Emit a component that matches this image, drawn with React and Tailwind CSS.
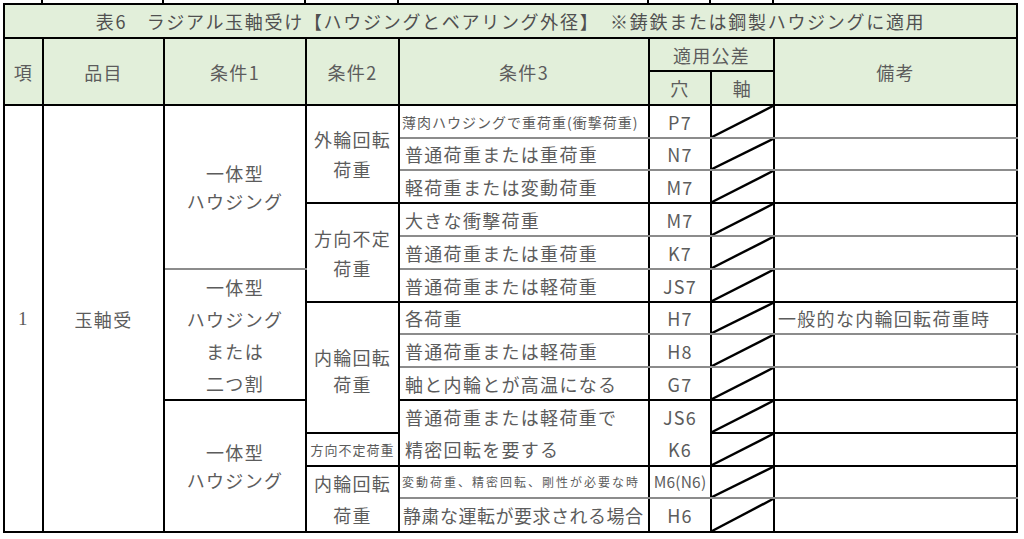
const font = "font-['Noto_Sans_CJK_JP','Noto_Sans',sans-serif]"

// rows whose bottom line is drawn black (group ends); the rest get a gray line
const thickEnds = [2, 5, 8, 9, 10, 12]

function Td({ end, rs, cs, className = '', children }) {
  const bottom = thickEnds.includes(end) ? 'border-b-black' : 'border-b-[#8c8c8c]'
  return (
    <td
      rowSpan={rs}
      colSpan={cs}
      className={`border-r-2 border-r-black border-b-2 ${bottom} p-0 align-middle ${className}`}
    >
      {children}
    </td>
  )
}

function Diag() {
  return (
    <svg className="absolute inset-0 w-full h-full" viewBox="0 0 100 100" preserveAspectRatio="none">
      <line x1="0" y1="100" x2="100" y2="0" stroke="#000" strokeWidth="2.4" vectorEffect="non-scaling-stroke" />
    </svg>
  )
}

const heights = ['h-[33px]', 'h-[32px]', 'h-[33px]', 'h-[33px]', 'h-[33px]', 'h-[33px]', 'h-[32px]', 'h-[33px]', 'h-[33px]', 'h-[33px]', 'h-[33px]', 'h-[32px]', 'h-[34px]']

const cond3 = [
  { t: '薄肉ハウジングで重荷重(衝撃荷重)', small: 'text-[14px] tracking-[1px] pl-[2px]', hole: 'P7' },
  { t: '普通荷重または重荷重', hole: 'N7' },
  { t: '軽荷重または変動荷重', hole: 'M7' },
  { t: '大きな衝撃荷重', hole: 'M7' },
  { t: '普通荷重または重荷重', hole: 'K7' },
  { t: '普通荷重または軽荷重', hole: 'JS7' },
  { t: '各荷重', hole: 'H7', note: '一般的な内輪回転荷重時' },
  { t: '普通荷重または軽荷重', hole: 'H8' },
  { t: '軸と内輪とが高温になる', hole: 'G7' },
  { merged: true },
  { skip: true },
  { t: '変動荷重、精密回転、剛性が必要な時', small: 'text-[12px] tracking-[2px] pl-[2px]', hole: 'M6(N6)', holeSmall: true },
  { t: '静粛な運転が要求される場合', small: 'tracking-[0.5px] pl-[3px]', hole: 'H6' },
]

function Lines({ items, lead }) {
  return (
    <div className={`flex flex-col items-center ${lead}`}>
      {items.map((s, i) => <span key={i}>{s}</span>)}
    </div>
  )
}

export default function App() {
  return (
    <div className={`w-[1024px] h-[539px] overflow-hidden bg-white text-[#5c5c5c] ${font} text-[18px] tracking-[1.3px]`}>
      <div className="flex h-[3px] ml-[4px]">
        <div className="w-[39px] border-r-2 border-black" />
        <div className="w-[121px] border-r-2 border-black" />
        <div className="w-[142px] border-r-2 border-black" />
        <div className="w-[93px] border-r-2 border-black" />
        <div className="w-[250px] border-r-2 border-black" />
        <div className="w-[62px] border-r-2 border-black" />
        <div className="w-[63px] border-r-2 border-black" />
      </div>
      <table className="ml-[3px] border-collapse table-fixed w-[1015px] border-t-2 border-l-2 border-black leading-none">
        <colgroup>
          <col className="w-[39px]" />
          <col className="w-[121px]" />
          <col className="w-[142px]" />
          <col className="w-[93px]" />
          <col className="w-[250px]" />
          <col className="w-[62px]" />
          <col className="w-[63px]" />
          <col className="w-[243px]" />
        </colgroup>
        <thead className="bg-[#e2efda] text-center">
          <tr className="h-[34px]">
            <Td end={12} cs={8} className="text-[#505050] tracking-[1.7px]">表6　ラジアル玉軸受け【ハウジングとベアリング外径】　※鋳鉄または鋼製ハウジングに適用</Td>
          </tr>
          <tr className="h-[33px]">
            <Td end={12} rs={2}>項</Td>
            <Td end={12} rs={2}>品目</Td>
            <Td end={12} rs={2}>条件1</Td>
            <Td end={12} rs={2}>条件2</Td>
            <Td end={12} rs={2}>条件3</Td>
            <Td end={12} cs={2}>適用公差</Td>
            <Td end={12} rs={2}>備考</Td>
          </tr>
          <tr className="h-[34px]">
            <Td end={12}>穴</Td>
            <Td end={12}>軸</Td>
          </tr>
        </thead>
        <tbody>
          {cond3.map((r, i) => (
            <tr key={i} className={heights[i]}>
              {i === 0 && (
                <>
                  <Td end={12} rs={13} className="text-center font-['Liberation_Serif',serif] text-[19px]">1</Td>
                  <Td end={12} rs={13} className="text-center">玉軸受</Td>
                  <Td end={4} rs={5}><Lines items={['一体型', 'ハウジング']} lead="leading-[28px]" /></Td>
                  <Td end={2} rs={3}><Lines items={['外輪回転', '荷重']} lead="leading-[30px]" /></Td>
                </>
              )}
              {i === 3 && <Td end={5} rs={3}><Lines items={['方向不定', '荷重']} lead="leading-[30px]" /></Td>}
              {i === 5 && <Td end={8} rs={4}><Lines items={['一体型', 'ハウジング', 'または', '二つ割']} lead="leading-[32px]" /></Td>}
              {i === 6 && <Td end={9} rs={4}><Lines items={['内輪回転', '荷重']} lead="leading-[27px] pt-[6px]" /></Td>}
              {i === 9 && <Td end={12} rs={4}><Lines items={['一体型', 'ハウジング']} lead="leading-[28px]" /></Td>}
              {i === 10 && <Td end={10} className="text-center text-[13px] tracking-[1px]">方向不定荷重</Td>}
              {i === 11 && <Td end={12} rs={2}><Lines items={['内輪回転', '荷重']} lead="leading-[32px]" /></Td>}

              {r.merged && (
                <>
                  <Td end={10} rs={2} className="pl-[5px]">
                    <div className="flex flex-col leading-[32px]">
                      <span>普通荷重または軽荷重で</span>
                      <span>精密回転を要する</span>
                    </div>
                  </Td>
                  <Td end={10} rs={2} className="text-center">
                    <div className="flex flex-col leading-[32px]">
                      <span>JS6</span>
                      <span>K6</span>
                    </div>
                  </Td>
                </>
              )}
              {!r.merged && !r.skip && (
                <>
                  <Td end={i} className={`whitespace-nowrap ${r.small ? r.small : 'pl-[5px]'}`}>{r.t}</Td>
                  <Td end={i} className={`text-center whitespace-nowrap ${r.holeSmall ? 'text-[15.5px] tracking-[0.2px]' : ''}`}>{r.hole}</Td>
                </>
              )}
              <Td end={i} className="relative"><Diag /></Td>
              <Td end={i} className="pl-[3px] whitespace-nowrap">{r.note || ''}</Td>
            </tr>
          ))}
        </tbody>
      </table>
    </div>
  )
}
